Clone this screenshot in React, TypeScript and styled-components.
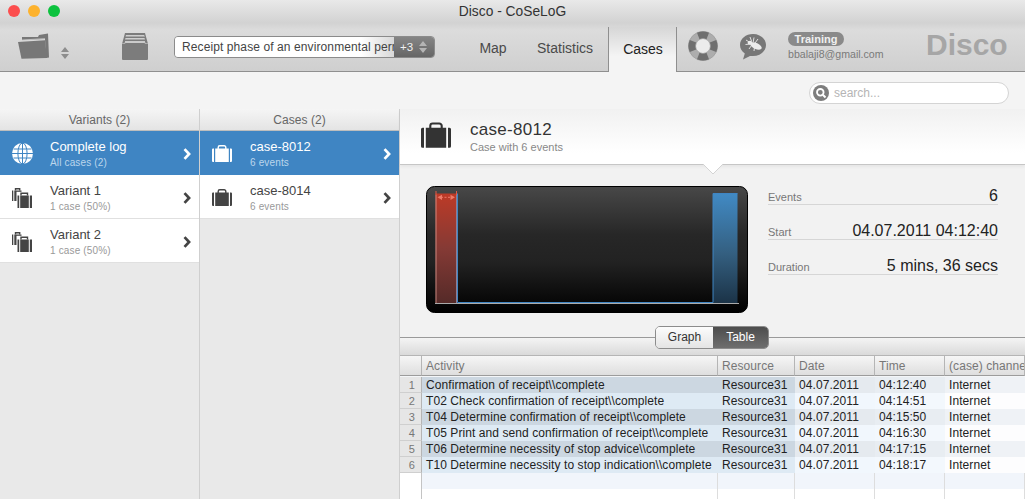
import React from "react";
import styled, { createGlobalStyle } from "styled-components";

const Global = createGlobalStyle`
  html, body { margin: 0; padding: 0; width: 1025px; height: 499px; overflow: hidden; background: #f4f4f4; }
  * { box-sizing: border-box; }
  body { font-family: "Liberation Sans", Arial, sans-serif; }
`;

const Win = styled.div`display:flex;flex-direction:column;width:1025px;height:499px;overflow:hidden;`;
const Chrome = styled.header`
  height:72px;display:flex;flex-direction:column;border-bottom:1px solid #8f8f8f;
  background:linear-gradient(#e9e9e9 0,#d2d2d2 23px,#dcdcdc 30px,#cfcfcf 100%);
`;
const TitleBar = styled.div`height:24px;position:relative;display:flex;align-items:center;justify-content:center;`;
const Lights = styled.div`position:absolute;left:8px;top:5px;display:flex;gap:8px;`;
const Light = styled.span<{ $c: string }>`width:12px;height:12px;border-radius:50%;background:${p => p.$c};`;
const Title = styled.div`font-size:13.8px;color:#333;line-height:16px;`;
const Toolbar = styled.div`flex:1;display:flex;align-items:stretch;position:relative;`;
const ToolIcon = styled.div<{ $w: number; $ml: number; $mt: number }>`width:${p => p.$w}px;margin-left:${p => p.$ml}px;padding-top:${p => p.$mt}px;flex:none;line-height:0;`;
const Combo = styled.div`
  margin:13px 0 0 26px;width:261px;height:22px;display:flex;border:1px solid #8b8b8b;border-radius:4px;overflow:hidden;flex:none;
`;
const ComboText = styled.div`
  flex:1;min-width:0;padding-left:7px;font-size:12px;line-height:20px;color:#444;white-space:nowrap;overflow:hidden;letter-spacing:.1px;
  background:linear-gradient(90deg,#fff 0,#fff 85%,#d8d8d8 100%);
`;
const ComboBadge = styled.div`
  width:40px;flex:none;display:flex;align-items:center;gap:6px;padding-left:6px;color:#f2f2f2;font-size:11.5px;
  background:linear-gradient(#858585,#666);
`;
const Tabs = styled.nav`display:flex;margin-left:25px;align-items:stretch;flex:none;`;
const Tab = styled.div<{ $w: number; $active?: boolean }>`
  width:${p => p.$w}px;margin-top:4px;height:44px;display:flex;align-items:center;justify-content:center;padding-bottom:2px;
  font-size:14px;color:${p => (p.$active ? "#222" : "#4a4a4a")};flex:none;
  ${p => p.$active ? `margin-left:4px;padding-left:1px;background:linear-gradient(#d6d6d6,#f4f4f4 65%);border:1px solid #8f8f8f;border-width:0 1px;height:45px;margin-bottom:-1px;position:relative;` : ""}
`;
const Account = styled.div`margin-left:22px;padding-top:9px;flex:none;width:100px;`;
const Badge = styled.div`
  width:56px;height:14px;border-radius:7px;background:#8a8a8a;color:#f0f0f0;font-size:11px;font-weight:bold;line-height:14px;text-align:center;
`;
const Email = styled.div`font-size:10.6px;color:#7a7a7a;line-height:12px;margin-top:2px;white-space:nowrap;`;
const Logo = styled.div`
  margin-left:38px;padding-top:5px;font-size:30px;font-weight:bold;line-height:34px;flex:none;
  color:#a6a6a6;
`;
const SearchBar = styled.div`height:37px;display:flex;justify-content:flex-end;padding:10px 16px 0 0;background:#f4f4f4;`;
const SearchBox = styled.div`
  width:200px;height:22px;border:1px solid #d4d4d4;border-radius:11px;background:#fff;display:flex;align-items:center;gap:5px;padding-left:3px;
  font-size:12px;color:#b5b5b5;line-height:14px;
`;
const Body = styled.main`flex:1;display:grid;grid-template-columns:200px 200px 625px;min-height:0;`;
const Column = styled.section`background:#e9e9e9;border-right:1px solid #cfcfcf;display:flex;flex-direction:column;`;
const ColHead = styled.div`
  height:22px;border-bottom:1px solid #bdbdbd;background:linear-gradient(#f5f5f5,#e4e4e4);text-align:center;font-size:12px;line-height:22px;color:#666;letter-spacing:.05px;
`;
const ListRow = styled.div<{ $sel?: boolean }>`
  height:44px;display:flex;align-items:center;padding:${p => (p.$sel ? "1px" : "2px")} 0 0 12px;background:${p => (p.$sel ? "#3f85c3" : "#fff")};
  ${p => (p.$sel ? "" : "border-bottom:1px solid #e0e0e0;")}
  color:${p => (p.$sel ? "#fff" : "#444")};
`;
const ListIcon = styled.div`width:38px;flex:none;line-height:0;`;
const ListText = styled.div`flex:1;min-width:0;`;
const ListTitle = styled.div`font-size:13px;line-height:16px;`;
const ListSub = styled.div<{ $sel?: boolean }>`font-size:10px;line-height:13px;margin-top:1px;letter-spacing:.15px;color:${p => (p.$sel ? "#bcd6ec" : "#999")};`;
const Chev = styled.div`width:16px;flex:none;line-height:0;`;

const Detail = styled.section`display:flex;flex-direction:column;min-width:0;position:relative;`;
const DetailHead = styled.div`
  height:56px;display:flex;align-items:center;padding:0 0 4px 21px;border-bottom:1px solid #c6c6c6;position:relative;
  background:linear-gradient(#f1f1f1,#fff 80%);box-shadow:0 2px 3px rgba(0,0,0,.05);
`;
const DetailIcon = styled.div`width:49px;flex:none;line-height:0;`;
const DetailText = styled.div`margin-top:5px;`;
const DetailTitle = styled.div`font-size:17px;line-height:20px;color:#333;letter-spacing:.3px;`;
const DetailSub = styled.div`font-size:11px;color:#888;line-height:13px;margin-top:1px;`;
const Notch = styled.svg`position:absolute;left:303px;top:55px;`;
const Overview = styled.div`height:173px;background:#f2f2f2;display:flex;padding:21px 0 0 26px;gap:20px;border-bottom:1px solid #9a9a9a;`;
const ChartBox = styled.div`width:322px;height:127px;flex:none;line-height:0;`;
const Stats = styled.dl`margin:0;width:230px;display:flex;flex-direction:column;gap:16px;`;
const Stat = styled.div`height:19px;display:flex;align-items:flex-end;justify-content:space-between;border-bottom:1px solid #d6d6d6;`;
const StatLabel = styled.dt`font-size:11px;line-height:13px;color:#777;`;
const StatValue = styled.dd`margin:0;font-size:16px;line-height:16px;color:#222;`;
const Band = styled.div`height:17px;background:linear-gradient(#f4f4f4,#dadada);position:relative;display:flex;justify-content:center;padding-right:1px;`;
const Seg = styled.div`
  position:absolute;top:-12px;width:114px;height:23px;display:flex;border:1px solid #8c8c8c;border-radius:5px;overflow:hidden;font-size:12px;
`;
const SegItem = styled.div<{ $on?: boolean }>`
  flex:${p => (p.$on ? "0 0 55px" : "1")};text-align:center;line-height:21px;
  ${p => p.$on ? "color:#fff;background:linear-gradient(#4d4d4d,#6e6e6e);" : "color:#333;background:linear-gradient(#fcfcfc,#e4e4e4);"}
`;
const GridTable = styled.table`
  table-layout:fixed;border-collapse:separate;border-spacing:0;width:625px;font-size:12px;background:#fff;flex:none;letter-spacing:.08px;
`;
const Th = styled.th<{ $w: number }>`
  width:${p => p.$w}px;height:21px;padding:0 0 0 4px;text-align:left;font-weight:normal;color:#777;overflow:hidden;white-space:nowrap;
  background:linear-gradient(#f6f6f6,#dedede);border-top:1px solid #b5b5b5;border-bottom:1px solid #9c9c9c;border-right:1px solid #b5b5b5;
`;
const SpacerCell = styled.td`height:1px;padding:0;font-size:0;line-height:0;background:#f4f6f8;`;
const NumCell = styled.td`height:16px;padding:1px 6px 0 0;text-align:right;font-size:11px;line-height:14px;color:#777;background:#e6e6e6;border-bottom:1px solid #cfcfcf;border-right:1px solid #b5b5b5;`;
const Td = styled.td<{ $bg: string }>`
  height:16px;padding:0 0 0 4px;line-height:16px;color:#222;white-space:nowrap;overflow:hidden;background:${p => p.$bg};
`;
const Tail = styled.div`flex:1;display:grid;grid-template-columns:22px 296px 77px 80px 70px 80px;background:#fff;`;
const TailCell = styled.div<{ $first?: boolean }>`border-right:1px solid #ddd;background:linear-gradient(#f1f5fb 16px,#fff 16px);${p => p.$first ? "background:#fff;border-right:1px solid #c4c4c4;" : ""}`;

const Briefcase = ({ w, h, c }: { w: number; h: number; c: string }) => (
  <svg width={w} height={h} viewBox="0 0 20 17" aria-hidden="true">
    <path d="M6.2 4V2.4A1.6 1.6 0 0 1 7.8.8h4.4a1.6 1.6 0 0 1 1.6 1.6V4" fill="none" stroke={c} strokeWidth="1.4" />
    <path d="M1 3.6h1V17H1a1 1 0 0 1-1-1V4.600a1 1 0 0 1 1-1zM3.200 3.600h13.600V17H3.200zM18 3.600h1a1 1 0 0 1 1 1V16a1 1 0 0 1-1 1h-1z" fill={c} />
  </svg>
);
const Cases = ({ c }: { c: string }) => (
  <svg width="21" height="20" viewBox="0 0 21 20" aria-hidden="true">
    <path d="M3.500 2.500V.8h4.200v1.700" fill="none" stroke={c} strokeWidth="1.400" />
    <path d="M0 2.500h1.300v10.500H0zM2.300 2.500h7.200v10.500H2.300z" fill={c} />
    <rect x="4.500" y="3.800" width="16.500" height="16.200" fill="#fff" />
    <path d="M9 7.500V5.200h6.500v2.300" fill="none" stroke={c} strokeWidth="1.400" />
    <path d="M5.500 7.500h1.700V20H5.500zM8.200 7.500h8.600V20H8.200zM17.800 7.500H20V20h-2.200z" fill={c} />
  </svg>
);
const Globe = () => (
  <svg width="21" height="21" viewBox="0 0 21 21" aria-hidden="true">
    <circle cx="10.500" cy="10.500" r="10.500" fill="#fff" />
    <g stroke="#3f85c3" strokeWidth="1" fill="none">
      <ellipse cx="10.500" cy="10.500" rx="4.600" ry="10.500" />
      <path d="M10.500 0v21M0 10.500h21M1.500 6h18M1.500 15h18" />
    </g>
  </svg>
);
const Chevron = ({ c }: { c: string }) => (
  <svg width="8" height="12" viewBox="0 0 8 12" aria-hidden="true">
    <path d="M1.500 1.100 6.100 6 1.500 10.900" fill="none" stroke={c} strokeWidth="2.700" />
  </svg>
);
const Folder = () => (
  <svg width="31" height="26" viewBox="0 0 31 26" aria-hidden="true">
    <path d="M4 4h16l1-2 9-1.500 1 24-3 .5L27 6 4 7z" fill="#777" />
    <path d="M4 7 27 5.600" stroke="#c8c8c8" strokeWidth=".8" />
    <path d="M0 9 27 7.200 29 25 3.500 25.800z" fill="#777" />
  </svg>
);
const Updown = ({ c }: { c: string }) => (
  <svg width="8" height="12" viewBox="0 0 8 12" aria-hidden="true">
    <path d="M4 0 8 5H0zM0 7h8l-4 5z" fill={c} />
  </svg>
);
const Archive = () => (
  <svg width="26" height="27" viewBox="0 0 26 27" aria-hidden="true">
    <path d="M3 0h20l3 11H0z" fill="#7c7c7c" />
    <path d="M4 2h18l1 1.500H3.500zM3.500 5h19l.5 1.500H3zM3 8h20v2H3z" fill="#cfcfcf" />
    <path d="M0 10h26v16q0 1-1 1H1q-1 0-1-1z" fill="#7c7c7c" />
    <path d="M0 10.500h3L3 9h20v1.500h3" fill="none" stroke="#c2c2c2" strokeWidth=".7" />
  </svg>
);
const Ring = () => (
  <svg width="30" height="30" viewBox="0 0 30 30" aria-hidden="true">
    <circle cx="15" cy="15" r="7" fill="#ececec" />
    <circle cx="15" cy="15" r="10.800" fill="none" stroke="#adadad" strokeWidth="7.600" />
    <circle cx="15" cy="15" r="14.600" fill="none" stroke="#999" strokeWidth=".7" />
    <g fill="#6f6f6f">
      <path d="M9 1.800A14.500 14.500 0 0 1 21 1.800L18.500 8.200A7.500 7.500 0 0 0 11.500 8.200z" />
      <path d="M9 28.200A14.500 14.500 0 0 0 21 28.200L18.500 21.800A7.500 7.500 0 0 1 11.500 21.800z" />
      <path d="M1.800 9A14.500 14.500 0 0 0 1.800 21L8.200 18.500A7.500 7.500 0 0 1 8.200 11.500z" />
      <path d="M28.200 9A14.500 14.500 0 0 1 28.200 21L21.800 18.500A7.500 7.500 0 0 0 21.800 11.500z" />
    </g>
  </svg>
);
const BugBubble = () => (
  <svg width="26" height="26" viewBox="0 0 26 26" aria-hidden="true">
    <path d="M13 0c7.200 0 13 4.800 13 11s-5.800 11-13 11h-3L3 25.500l1.800-6C1.800 17.500 0 14.500 0 11 0 4.800 5.800 0 13 0z" fill="#777" />
    <g stroke="#ececec" strokeWidth=".9" fill="none">
      <path d="M6 6l4 2.500M10 3l1.500 4M14 3.500l-.8 4.500M18 5l-3 4M5.500 10.500l5-.5M9 15l2.500-3.500M14 17l.5-4" />
    </g>
    <ellipse cx="10" cy="8.800" rx="2.400" ry="2" fill="#ececec" />
    <ellipse cx="16" cy="12" rx="6.200" ry="3" transform="rotate(25 16 12)" fill="#ececec" />
  </svg>
);
const Magnifier = () => (
  <svg width="16" height="16" viewBox="0 0 16 16" aria-hidden="true">
    <circle cx="8" cy="8" r="8" fill="#7e7e7e" />
    <circle cx="7.300" cy="7.300" r="3.300" fill="none" stroke="#fff" strokeWidth="1.800" />
    <path d="M9.800 9.800 12.500 12.500" stroke="#fff" strokeWidth="2" />
  </svg>
);
const Chart = () => (
  <svg width="322" height="127" viewBox="0 0 322 127" role="img" aria-label="Active cases over time">
    <defs>
      <linearGradient id="bg" x1="0" y1="0" x2="0" y2="1">
        <stop offset="0" stopColor="#484848" /><stop offset=".38" stopColor="#272727" /><stop offset=".6" stopColor="#222" /><stop offset=".88" stopColor="#0a0a0a" /><stop offset="1" stopColor="#000" />
      </linearGradient>
      <linearGradient id="red" x1="0" y1="0" x2="0" y2="1">
        <stop offset="0" stopColor="#bd3a27" /><stop offset=".5" stopColor="#853a35" /><stop offset="1" stopColor="#552a28" />
      </linearGradient>
      <linearGradient id="blue" x1="0" y1="0" x2="0" y2="1">
        <stop offset="0" stopColor="#418ac4" /><stop offset=".55" stopColor="#345f80" /><stop offset="1" stopColor="#1b3347" />
      </linearGradient>
    </defs>
    <rect x=".5" y=".5" width="321" height="126" rx="8" fill="url(#bg)" stroke="#000" />
    <rect x="287" y="7.500" width="24.500" height="109.500" fill="url(#blue)" />
    <path d="M31.500 7.500V116.500H287V7.500H311.500" fill="none" stroke="#3f85c3" strokeWidth="1" />
    <rect x="9.500" y="7.500" width="21" height="109.500" fill="url(#red)" />
    <path d="M10 5v4M30.500 5v4" stroke="#e25a47" strokeWidth="1" />
    <path d="M30.500 9v108" stroke="#8f7f95" strokeWidth="1" />
    <path d="M10 9v108" stroke="#d99a8f" strokeWidth=".8" />
    <path d="M15 11.300h11" stroke="#ee7a68" strokeWidth="1" strokeDasharray="2 1.500" />
    <path d="M11.500 11.300l4.500-2.600v5.200zM29 11.300l-4.500-2.600v5.200z" fill="#ee7a68" />
    <path d="M9 117.500h304" stroke="#aaa" strokeWidth="1" />
  </svg>
);

const rows = [
  ["Confirmation of receipt\\\\complete", "04:12:40"],
  ["T02 Check confirmation of receipt\\\\complete", "04:14:51"],
  ["T04 Determine confirmation of receipt\\\\complete", "04:15:50"],
  ["T05 Print and send confirmation of receipt\\\\complete", "04:16:30"],
  ["T06 Determine necessity of stop advice\\\\complete", "04:17:15"],
  ["T10 Determine necessity to stop indication\\\\complete", "04:18:17"],
];
const tint = (i: number, col: number) =>
  i % 2 === 0
    ? ["#ccd7e1", "#ccd7e1", "#e5eaef", "#e8edf2", "#eff2f6"][col]
    : ["#deeaf4", "#deeaf4", "#f1f7fd", "#f3f8fd", "#fdfdfe"][col];

export default function App() {
  return (
    <Win>
      <Global />
      <Chrome>
        <TitleBar>
          <Lights>
            <Light $c="#fc4e4e" /><Light $c="#fdb22d" /><Light $c="#0cc23e" />
          </Lights>
          <Title>Disco - CoSeLoG</Title>
        </TitleBar>
        <Toolbar>
          <ToolIcon $w={31} $ml={18} $mt={10}><Folder /></ToolIcon>
          <ToolIcon $w={8} $ml={12} $mt={24}><Updown c="#8d8d8d" /></ToolIcon>
          <ToolIcon $w={26} $ml={53} $mt={10}><Archive /></ToolIcon>
          <Combo>
            <ComboText>Receipt phase of an environmental permit</ComboText>
            <ComboBadge>+3<Updown c="#b4b4b4" /></ComboBadge>
          </Combo>
          <Tabs>
            <Tab $w={66}>Map</Tab>
            <Tab $w={78}>Statistics</Tab>
            <Tab $w={69} $active>Cases</Tab>
          </Tabs>
          <ToolIcon $w={30} $ml={11} $mt={8}><Ring /></ToolIcon>
          <ToolIcon $w={26} $ml={22} $mt={11}><BugBubble /></ToolIcon>
          <Account>
            <Badge>Training</Badge>
            <Email>bbalaji8@gmail.com</Email>
          </Account>
          <Logo>Disco</Logo>
        </Toolbar>
      </Chrome>
      <SearchBar>
        <SearchBox><Magnifier /><span>search...</span></SearchBox>
      </SearchBar>
      <Body>
        <Column>
          <ColHead>Variants (2)</ColHead>
          <ListRow $sel>
            <ListIcon><Globe /></ListIcon>
            <ListText><ListTitle>Complete log</ListTitle><ListSub $sel>All cases (2)</ListSub></ListText>
            <Chev><Chevron c="#fff" /></Chev>
          </ListRow>
          <ListRow>
            <ListIcon><Cases c="#444" /></ListIcon>
            <ListText><ListTitle>Variant 1</ListTitle><ListSub>1 case (50%)</ListSub></ListText>
            <Chev><Chevron c="#444" /></Chev>
          </ListRow>
          <ListRow>
            <ListIcon><Cases c="#444" /></ListIcon>
            <ListText><ListTitle>Variant 2</ListTitle><ListSub>1 case (50%)</ListSub></ListText>
            <Chev><Chevron c="#444" /></Chev>
          </ListRow>
        </Column>
        <Column>
          <ColHead>Cases (2)</ColHead>
          <ListRow $sel>
            <ListIcon><Briefcase w={20} h={17} c="#fff" /></ListIcon>
            <ListText><ListTitle>case-8012</ListTitle><ListSub $sel>6 events</ListSub></ListText>
            <Chev><Chevron c="#fff" /></Chev>
          </ListRow>
          <ListRow>
            <ListIcon><Briefcase w={20} h={17} c="#444" /></ListIcon>
            <ListText><ListTitle>case-8014</ListTitle><ListSub>6 events</ListSub></ListText>
            <Chev><Chevron c="#444" /></Chev>
          </ListRow>
        </Column>
        <Detail>
          <DetailHead>
            <DetailIcon><Briefcase w={30} h={26} c="#333" /></DetailIcon>
            <DetailText>
              <DetailTitle>case-8012</DetailTitle>
              <DetailSub>Case with 6 events</DetailSub>
            </DetailText>
            <Notch width="20" height="11" viewBox="0 0 20 11" aria-hidden="true">
              <path d="M0 0 10 10 20 0" fill="#fff" stroke="#d4d4d4" />
              <path d="M1 0h18" stroke="#fff" strokeWidth="2" />
            </Notch>
          </DetailHead>
          <Overview>
            <ChartBox><Chart /></ChartBox>
            <Stats>
              <Stat><StatLabel>Events</StatLabel><StatValue>6</StatValue></Stat>
              <Stat><StatLabel>Start</StatLabel><StatValue>04.07.2011 04:12:40</StatValue></Stat>
              <Stat><StatLabel>Duration</StatLabel><StatValue>5 mins, 36 secs</StatValue></Stat>
            </Stats>
          </Overview>
          <Band>
            <Seg><SegItem>Graph</SegItem><SegItem $on>Table</SegItem></Seg>
          </Band>
          <GridTable>
            <thead>
              <tr>
                <Th $w={22} />
                <Th $w={296}>Activity</Th>
                <Th $w={77}>Resource</Th>
                <Th $w={80}>Date</Th>
                <Th $w={70}>Time</Th>
                <Th $w={80}>(case) channel</Th>
              </tr>
            </thead>
            <tbody>
              <tr><SpacerCell colSpan={6} /></tr>
              {rows.map((r, i) => (
                <tr key={r[1]}>
                  <NumCell>{i + 1}</NumCell>
                  <Td $bg={tint(i, 0)}>{r[0]}</Td>
                  <Td $bg={tint(i, 1)}>Resource31</Td>
                  <Td $bg={tint(i, 2)}>04.07.2011</Td>
                  <Td $bg={tint(i, 3)}>{r[1]}</Td>
                  <Td $bg={tint(i, 4)}>Internet</Td>
                </tr>
              ))}
            </tbody>
          </GridTable>
          <Tail>
            <TailCell $first /><TailCell /><TailCell /><TailCell /><TailCell /><TailCell />
          </Tail>
        </Detail>
      </Body>
    </Win>
  );
}
